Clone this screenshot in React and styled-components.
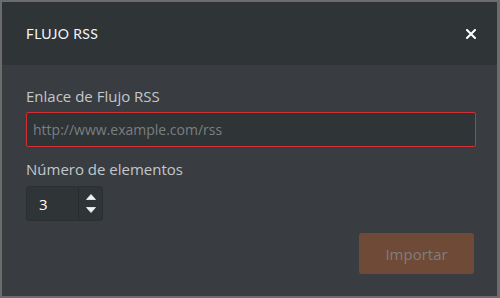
import styled, { createGlobalStyle } from "styled-components";

const Global = createGlobalStyle`
  html, body {
    margin: 0;
    padding: 0;
    background: #6c6c6c;
  }
  * {
    box-sizing: border-box;
  }
`;

const Backdrop = styled.div`
  width: 500px;
  height: 298px;
  padding: 2px 3px 2px 2px;
  display: flex;
`;

const Dialog = styled.div`
  flex: 1;
  display: flex;
  flex-direction: column;
  background: #393d41;
  font-family: "Open Sans", "Noto Sans", sans-serif;
`;

const Header = styled.div`
  height: 63px;
  flex-shrink: 0;
  background: #2f3437;
  display: flex;
  align-items: center;
  justify-content: space-between;
  padding: 0 21px 0 24px;
`;

const Title = styled.h1`
  margin: 0;
  font-family: Lato, "Open Sans", sans-serif;
  font-size: 14px;
  font-weight: 400;
  letter-spacing: 0.3px;
  color: #f4f6f8;
`;

const Close = styled.button`
  border: 0;
  background: none;
  padding: 0;
  width: 11px;
  height: 11px;
  display: flex;
  align-items: center;
  justify-content: center;
  cursor: pointer;
`;

const Body = styled.div`
  flex: 1;
  display: flex;
  flex-direction: column;
  padding: 21px 21px 22px 24px;
`;

const Label = styled.label`
  display: block;
  font-size: 15px;
  line-height: 20px;
  color: #c3c7cb;
  margin-bottom: ${(p) => p.$gap || 6}px;
`;

const TextInput = styled.input`
  width: 100%;
  height: 35px;
  border: 1px solid #d02f33;
  border-radius: 2px;
  background: #2f3437;
  color: #ddd;
  font-family: "Open Sans", "Noto Sans", sans-serif;
  font-size: 14px;
  padding: 0 6px;
  margin-bottom: 12px;
  outline: none;
  &::placeholder {
    color: #7b7f82;
  }
`;

const Spinner = styled.div`
  width: 77px;
  height: 35px;
  display: flex;
  border: 1px solid #2b2f32;
  border-radius: 3px;
  background: #2f3437;
`;

const SpinValue = styled.div`
  flex: 1;
  display: flex;
  align-items: center;
  padding-left: 12px;
  font-size: 15px;
  color: #ffffff;
`;

const SpinArrows = styled.div`
  width: 24px;
  border-left: 1px solid #272b2e;
  display: flex;
  flex-direction: column;
  align-items: center;
  justify-content: center;
  gap: 7px;
`;

const Footer = styled.div`
  margin-top: auto;
  display: flex;
  justify-content: flex-end;
  padding-right: 2px;
`;

const Button = styled.button`
  width: 115px;
  height: 41px;
  border: 0;
  border-radius: 3px;
  background: #6f4a36;
  color: #7e7f7f;
  font-family: "Open Sans", "Noto Sans", sans-serif;
  font-size: 15px;
  cursor: default;
`;

function Arrow({ down }) {
  return (
    <svg width="10" height="6" viewBox="0 0 10 6">
      <polygon
        points={down ? "0.5,0.5 9.5,0.5 5,5.5" : "0.5,5.5 9.5,5.5 5,0.5"}
        fill="#f2f2f2"
        stroke="#f2f2f2"
        strokeWidth="0.8"
        strokeLinejoin="round"
      />
    </svg>
  );
}

export default function App() {
  return (
    <>
      <Global />
      <Backdrop>
        <Dialog>
          <Header>
            <Title>FLUJO RSS</Title>
            <Close aria-label="Cerrar">
              <svg width="10" height="10" viewBox="0 0 10 10">
                <path
                  d="M1 1 L9 9 M9 1 L1 9"
                  stroke="#ffffff"
                  strokeWidth="2"
                  strokeLinecap="square"
                />
              </svg>
            </Close>
          </Header>
          <Body>
            <Label>Enlace de Flujo RSS</Label>
            <TextInput placeholder="http://www.example.com/rss" />
            <Label $gap={7}>Número de elementos</Label>
            <Spinner>
              <SpinValue>3</SpinValue>
              <SpinArrows>
                <Arrow />
                <Arrow down />
              </SpinArrows>
            </Spinner>
            <Footer>
              <Button>Importar</Button>
            </Footer>
          </Body>
        </Dialog>
      </Backdrop>
    </>
  );
}
